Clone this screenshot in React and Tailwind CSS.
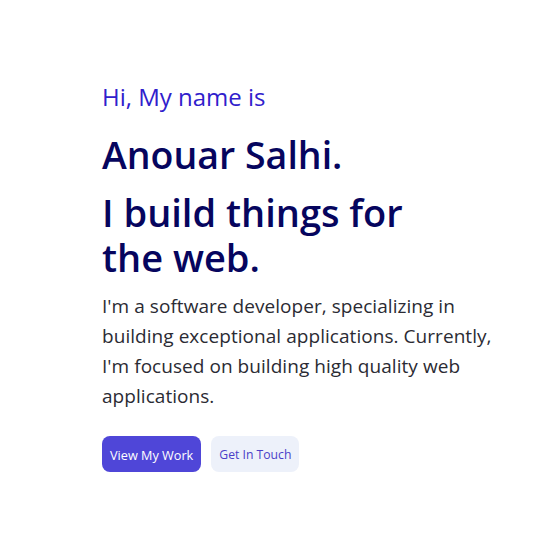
export default function App() {
  return (
    <div className="min-h-screen bg-white" style={{ fontFamily: '"Open Sans", "Noto Sans", sans-serif' }}>
      <div className="pl-[102px] pt-[81px] w-[520px]">
        <p className="text-[24px] leading-[32px] text-[#3020cc]">Hi, My name is</p>
        <h1 className="mt-[19px] text-[37.5px] leading-[45px] font-semibold text-[#06055e]">Anouar Salhi.</h1>
        <h2 className="mt-[13px] text-[38px] leading-[45px] font-semibold text-[#06055e] w-[340px]">I build things for the web.</h2>
        <p className="mt-[11px] text-[19px] leading-[30px] tracking-[0.05px] text-[#2b2b33] w-[396px]">
          I'm a software developer, specializing in building exceptional applications. Currently, I'm focused on building high quality web applications.
        </p>
        <div className="mt-[25px] flex gap-[10px]">
          <button className="h-9 px-2 pt-[3px] rounded-lg bg-[#4f46d8] text-white text-[12.7px]">View My Work</button>
          <button className="h-9 px-2 pt-[3px] rounded-lg bg-[#edf1fa] text-[#4a3fc8] text-[12.2px]">Get In Touch</button>
        </div>
      </div>
    </div>
  );
}
